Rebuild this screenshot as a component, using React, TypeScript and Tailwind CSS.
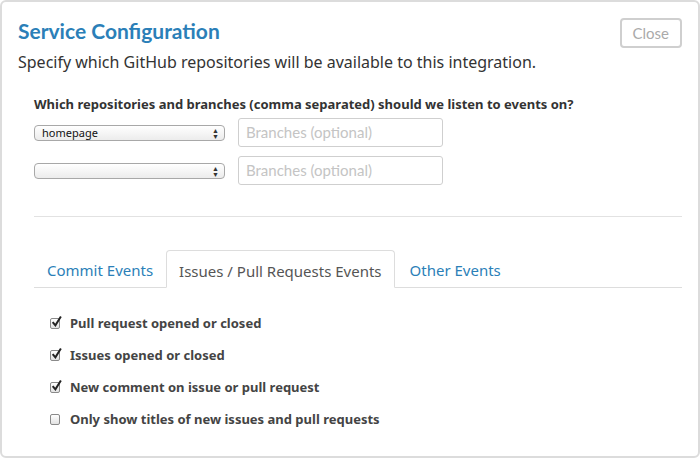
export default function App() {
  const items = [
    { label: "Pull request opened or closed", checked: true },
    { label: "Issues opened or closed", checked: true },
    { label: "New comment on issue or pull request", checked: true },
    { label: "Only show titles of new issues and pull requests", checked: false },
  ];
  return (
    <div className="w-[700px] h-[458px] bg-white font-[family-name:'Liberation_Sans',Arial,sans-serif]">
      <div className="w-full h-full border-2 border-[#dcdcdc] rounded-md">
        <div className="flex justify-between pl-[16px] pr-[16px] pt-[16px]">
          <div>
            <h1 className="font-[family-name:Lato,sans-serif] font-bold text-[21px] leading-[26px] text-[#2b7fb8]">
              Service Configuration
            </h1>
            <p className="mt-[8px] text-[16px] leading-[20px] text-[#333]">
              Specify which GitHub repositories will be available to this integration.
            </p>
          </div>
          <button className="h-[30px] px-[11px] border-2 border-[#cfcfcf] rounded-[4px] font-[family-name:Lato,sans-serif] text-[15px] text-[#aaa]">
            Close
          </button>
        </div>

        <div className="ml-[32px] mr-[16px] mt-[24px]">
          <p className="text-[13px] font-bold text-[#333] leading-[16px]">
            Which repositories and branches (comma separated) should we listen to events on?
          </p>
          <div className="flex flex-col gap-[9px] mt-[6px]">
            {["homepage", ""].map((v, i) => (
              <div key={i} className="flex items-center gap-[13px]">
                <div className="relative w-[191px] h-[16px] border border-[#a8a8a8] rounded-[4px] bg-gradient-to-b from-white to-[#ececec] text-[11px] leading-[14px] pl-[7px] text-[#111]">
                  {v}
                  <span className="absolute right-[5px] top-0 text-[7px] leading-[7px] flex flex-col pt-[1px] text-[#333]">
                    <span>▲</span>
                    <span className="-mt-[1px]">▼</span>
                  </span>
                </div>
                <div className="w-[205px] h-[29px] border border-[#cfcfcf] rounded-[3px] font-[family-name:Lato,sans-serif] text-[15px] text-[#c4c4c4] pl-[7px] leading-[27px]">
                  Branches (optional)
                </div>
              </div>
            ))}
          </div>
          <div className="mt-[31px] border-t border-[#e2e2e2]" />

          <div className="mt-[33px] flex border-b border-[#dddddd] h-[38px] text-[15px]">
            <div className="px-[13px] pt-[9px] text-[#2b7fb8]">Commit Events</div>
            <div className="px-[12px] pt-[9px] text-[#555] border border-[#dddddd] border-b-white rounded-t-[4px] -mb-px bg-white">
              Issues / Pull Requests Events
            </div>
            <div className="px-[15px] pt-[9px] text-[#2b7fb8]">Other Events</div>
          </div>

          <div className="mt-[27px] pl-[4px] flex flex-col gap-[15px]">
            {items.map((it) => (
              <label key={it.label} className="flex items-center gap-[10px] text-[13px] font-bold text-[#444] leading-[17px]">
                <span className="relative w-[10px] h-[11px] border border-[#8a8a8a] rounded-[2px] bg-gradient-to-b from-white to-[#e2e2e2] ml-[12px]">
                  {it.checked && (
                    <svg viewBox="0 0 10 10" className="absolute -top-[3px] left-0 w-[11px] h-[11px]">
                      <path d="M1.5 5.5 L4 8.5 L9 0.5" stroke="#222" strokeWidth="1.8" fill="none" />
                    </svg>
                  )}
                </span>
                {it.label}
              </label>
            ))}
          </div>
        </div>
      </div>
    </div>
  );
}
